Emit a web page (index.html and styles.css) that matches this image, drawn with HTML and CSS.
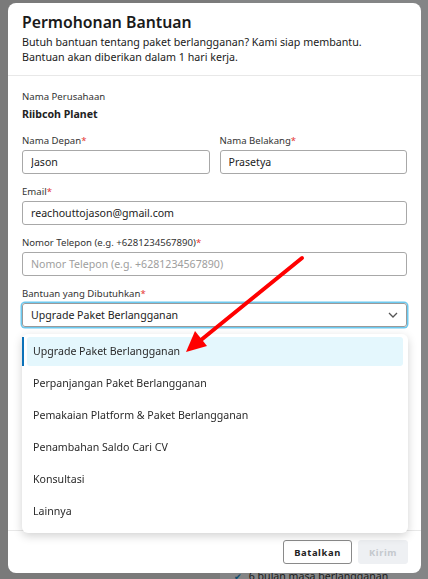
FILE: index.html
```html
<!DOCTYPE html>
<html lang="en">
<head>
  <meta charset="UTF-8" />
  <meta name="viewport" content="width=device-width, initial-scale=1.0"/>
  <title>Permohonan Bantuan</title>
  <link rel="stylesheet" href="styles.css">
</head>
<body>

<div class="page">
  <div class="page-side"></div>
  <div class="page-main">
    <div class="plan-note">
      <span class="plan-check">&#10004;</span> 6 bulan masa berlangganan
    </div>
  </div>
</div>

<div class="overlay">
  <div class="modal">
    <div class="modal-head">
      <h1>Permohonan Bantuan</h1>
      <p>Butuh bantuan tentang paket berlangganan? Kami siap membantu.<br>
      Bantuan akan diberikan dalam 1 hari kerja.</p>
    </div>

    <form class="modal-body">
      <div class="company">
        <div class="label">Nama Perusahaan</div>
        <div class="company-name">Riibcoh Planet</div>
      </div>

      <div class="row">
        <div class="field">
          <label for="first">Nama Depan<span class="req">*</span></label>
          <input type="text" id="first" value="Jason">
        </div>
        <div class="field">
          <label for="last">Nama Belakang<span class="req">*</span></label>
          <input type="text" id="last" value="Prasetya">
        </div>
      </div>

      <div class="field">
        <label for="email">Email<span class="req">*</span></label>
        <input type="text" id="email" value="reachouttojason@gmail.com">
      </div>

      <div class="field">
        <label for="phone">Nomor Telepon (e.g. +6281234567890)<span class="req">*</span></label>
        <input type="text" id="phone" placeholder="Nomor Telepon (e.g. +6281234567890)">
      </div>

      <div class="field">
        <label>Bantuan yang Dibutuhkan<span class="req">*</span></label>
        <div class="select">
          <span class="select-value">Upgrade Paket Berlangganan</span>
          <svg width="10" height="6" viewBox="0 0 10 6"><path d="M1 1l4 4 4-4" fill="none" stroke="#555" stroke-width="1.3"/></svg>
        </div>
        <ul class="menu">
          <li class="active">Upgrade Paket Berlangganan</li>
          <li>Perpanjangan Paket Berlangganan</li>
          <li>Pemakaian Platform &amp; Paket Berlangganan</li>
          <li>Penambahan Saldo Cari CV</li>
          <li>Konsultasi</li>
          <li>Lainnya</li>
        </ul>
      </div>
    </form>

    <div class="modal-foot">
      <button type="button" class="btn-cancel">Batalkan</button>
      <button type="button" class="btn-send" disabled>Kirim</button>
    </div>
  </div>
</div>

<svg class="arrow" width="428" height="579" viewBox="0 0 428 579">
  <line x1="302" y1="258" x2="201" y2="340" stroke="#f00" stroke-width="4" stroke-linecap="round"/>
  <polygon points="186,352 195,331 207,346" fill="#f00"/>
</svg>

</body>
</html>
```

FILE: styles.css
```css
* {
  box-sizing: border-box;
}
body {
  margin: 0;
  font-family: "Noto Sans", "Open Sans", sans-serif;
  color: #222;
  width: 428px;
  height: 579px;
  overflow: hidden;
}
.page {
  display: flex;
  height: 579px;
  background: #ececec;
}
.page-side {
  width: 220px;
  background: #e2e2e2;
}
.page-main {
  flex: 1;
  display: flex;
  align-items: flex-end;
  background: #f4f6f8;
  padding: 0 0 0 14px;
}
.plan-note {
  font-size: 10.6px;
  color: #333;
  line-height: 10px;
  margin-bottom: -3px;
}
.plan-check {
  color: #1a8ccc;
  font-size: 9px;
  margin-right: 4px;
}
.overlay {
  position: fixed;
  inset: 0;
  background: rgba(0, 0, 0, 0.46);
}
.modal {
  position: absolute;
  top: 3px;
  left: 8px;
  width: 413px;
  height: 570px;
  background: #fff;
  border-radius: 8px;
  display: flex;
  flex-direction: column;
}
.modal-head {
  padding: 8px 14px 10px;
  border-bottom: 1px solid #e8e8e8;
}
.modal-head h1 {
  margin: 0;
  font-size: 15.8px;
  line-height: 22px;
  font-weight: 600;
  color: #1a1a1a;
}
.modal-head p {
  margin: 2px 0 0;
  font-size: 10.7px;
  line-height: 15px;
  color: #1a1a1a;
}
.modal-body {
  position: relative;
  flex: 1;
  padding: 13px 14px 0;
}
.company {
  margin-bottom: 9px;
}
.label,
.field label {
  display: block;
  font-size: 9.6px;
  line-height: 16px;
  color: #333;
}
.company-name {
  font-size: 10.6px;
  font-weight: 700;
  line-height: 19px;
  color: #222;
}
.req {
  color: #e53935;
}
.row {
  display: flex;
  gap: 10px;
}
.row .field {
  flex: 1;
}
.field {
  margin-bottom: 10px;
}
.field label {
  margin-bottom: 1px;
}
.field input {
  display: block;
  width: 100%;
  height: 24px;
  border: 1px solid #a8a8a8;
  border-radius: 3px;
  padding: 0 8px;
  font-family: inherit;
  font-size: 10.6px;
  color: #222;
}
.field input::placeholder {
  color: #9e9e9e;
}
.select {
  height: 24px;
  border: 1px solid #9a9a9a;
  border-radius: 3px;
  box-shadow: 0 0 0 1.5px #6cc9ef;
  padding: 0 8px 0 8px;
  display: flex;
  align-items: center;
  justify-content: space-between;
}
.select-value {
  font-size: 10.6px;
  color: #222;
}
.menu {
  position: absolute;
  left: 14px;
  right: 13px;
  top: 258px;
  margin: 0;
  padding: 3px 5px 7px;
  list-style: none;
  background: #fff;
  border-radius: 6px;
  box-shadow: 0 3px 10px rgba(0, 0, 0, 0.18);
  z-index: 2;
}
.menu li {
  position: relative;
  height: 29px;
  line-height: 29px;
  padding-left: 6px;
  margin-bottom: 3px;
  font-size: 10.6px;
  color: #2a2a2a;
  border-radius: 3px;
}
.menu li:last-child {
  margin-bottom: 0;
}
.menu li.active {
  background: #e4f7fd;
}
.menu li.active::before {
  content: "";
  position: absolute;
  left: -5px;
  top: 0;
  bottom: 0;
  width: 2px;
  background: #0b72b9;
}
.modal-foot {
  border-top: 1px solid #e8e8e8;
  padding: 9px 13px 9px;
  display: flex;
  justify-content: flex-end;
  gap: 6px;
}
.modal-foot button {
  height: 24px;
  border-radius: 3px;
  font-family: inherit;
  font-size: 9.4px;
  font-weight: 700;
  letter-spacing: 0.6px;
  padding: 0 8px;
}
.btn-cancel {
  background: #fff;
  border: 1px solid #8a8a8a;
  color: #222;
  width: 69px;
}
.btn-send {
  background: #eef0f3;
  border: 1px solid #eef0f3;
  color: #c4c8cd;
  width: 50px;
}
.arrow {
  position: fixed;
  top: 0;
  left: 0;
  pointer-events: none;
}
```
